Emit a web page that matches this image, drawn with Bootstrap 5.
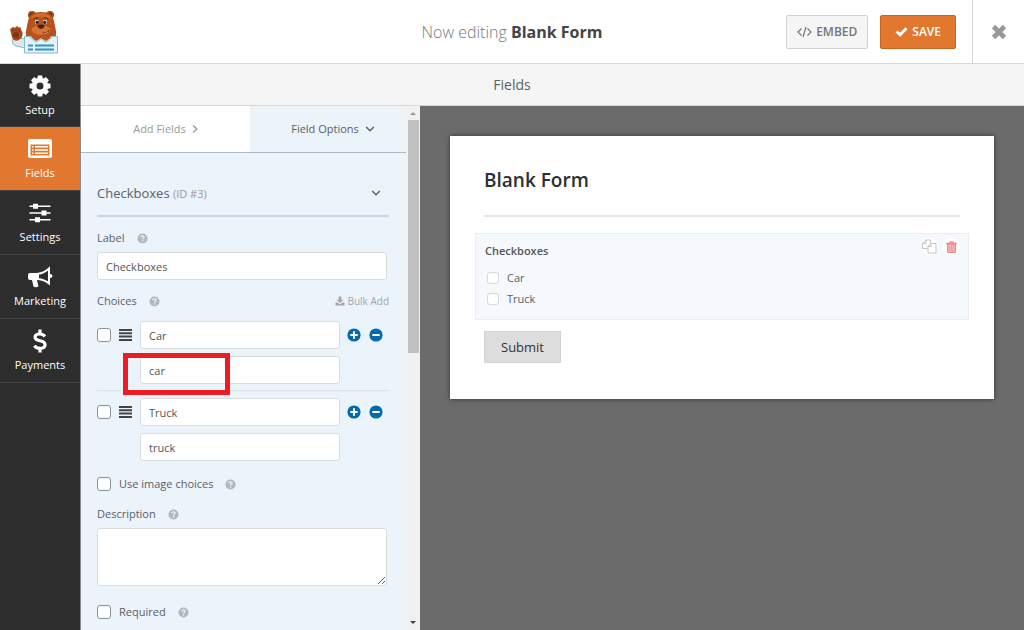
<!DOCTYPE html>
<html lang="en">
<head>
<meta charset="utf-8">
<meta name="viewport" content="width=device-width, initial-scale=1">
<title>Form Builder - Blank Form</title>
<link href="https://cdn.jsdelivr.net/npm/bootstrap@5.3.0/dist/css/bootstrap.min.css" rel="stylesheet">
<style>
  body { font-family: "Open Sans", "Noto Sans", sans-serif; font-size: 11px; line-height: 18px; color: #5b6066; }
  svg { display: block; flex: none; }
  button { color: inherit; }

  .topbar { display: grid; grid-template-columns: 1fr auto 1fr; height: 64px; border-bottom: 1px solid #d9d9d9; }
  .topbar h1 { font-size: 16px; line-height: 24px; font-weight: 300; color: #777; }
  .topbar h1 b { font-weight: 700; color: #444; }
  .tool { height: 34px; font-size: 12px; line-height: 18px; font-weight: 600; border-radius: 2px; padding: 0 10px; gap: 4px; }
  .tool-embed { background: #f5f5f5; border: 1px solid #d3d3d3; color: #777; }
  .tool-save { background: #e27730; border: 1px solid #c9641f; color: #fff; padding: 0 14px; }
  .tool-close { width: 52px; border-left: 1px solid #d6d6d6; color: #999; }

  .rail { width: 81px; background: #2d2d2d; border-right: 1px solid #8b8d90; }
  .rail a { height: 64px; color: #fff; border-bottom: 1px solid #414141; padding-top: 10px; gap: 3px; text-decoration: none; }
  .rail a:first-child { height: 63px; }
  .rail a.active { background: #e27730; }

  .section-bar { height: 42px; background: #f5f5f5; border-bottom: 1px solid #d6d6d6; font-size: 14px; padding-right: 81px; }

  .side { width: 339px; }
  .options { background: #ebf3fb; min-width: 0; }
  .tabs { height: 47px; border-bottom: 1px solid #b0b9cb; }
  .tabs button { gap: 6px; }
  .tab-add { background: #fff; color: #999; width: 169px; }
  .fields { padding: 0 17px 0 16px; }
  .group-head { height: 64px; padding: 18px 8px 0 0; border-bottom: 2px solid #cbd5e2; font-size: 13px; }
  .group-head small { font-size: 11px; color: #999; }
  .line { display: flex; align-items: center; gap: 8px; margin: 12px 0 5px; }
  .line-list { margin-bottom: 11px; }
  .line-tick { margin-top: 14px; }
  .help { color: #b3b8bd; }
  .box { height: 28px; padding: 0 8px; font-size: 11px; line-height: 18px; color: #555; border: 1px solid #d9dcdf; border-radius: 3px; background: #fff; }
  .wide { display: block; width: calc(100% - 2px); }
  .tick { appearance: none; width: 14px; height: 14px; margin: 0; flex: none; border: 1px solid #8c9299; border-radius: 3px; background: #fff; }
  .tick:checked { background: #036aab; }
  .choice { display: grid; grid-template-columns: 14px 15px 1fr 42px; column-gap: 7px; row-gap: 7px; align-items: center; }
  .choice .box { width: 100%; }
  .choice .value { grid-column: 3; }
  .choice + .choice { border-top: 1px solid #dde2e7; margin-top: 6px; padding-top: 7px; }
  .marker { position: absolute; left: 26px; top: 32px; width: 107px; height: 42px; border: 5px solid #ed1c24; }
  .notes { height: 58px; margin-bottom: 17px; resize: vertical; }
  .bulk { color: #a2a6aa; font-size: 10px; gap: 2px; text-decoration: none; }

  .scroller { width: 14px; background: #f1f1f1; }
  .scroller .thumb { width: 11px; height: 233px; background: #c1c1c1; }

  .canvas { background: #6b6b6b; padding: 30px; min-width: 0; }
  .sheet { background: #fff; padding: 30px 25px 36px; box-shadow: 0 0 5px rgba(0,0,0,.5); }
  .sheet h2 { font-size: 19px; line-height: 28px; font-weight: 600; color: #2b2f36; margin: 0 9px; padding-bottom: 21px; border-bottom: 2px solid #e6e6e6; }
  .field-card { background: #f5f8fc; border: 1px solid #ebedef; margin: 16px 0 11px; padding: 8px 9px 10px; }
  .field-title { font-weight: 600; color: #555; margin-bottom: 7px; }
  .field-card label { height: 21px; gap: 8px; padding-left: 2px; }
  .field-card .tick { width: 12px; height: 12px; border-color: #d5d8dc; }
  .actions { position: absolute; top: 4px; right: 8px; gap: 5px; }
  .actions button { width: 17px; height: 17px; border-radius: 50%; background: #fff; }
  .submit { height: 32px; margin-left: 9px; padding: 0 16px; background: #ddd; border: 1px solid #d3d3d3; color: #333; font-size: 13px; }
</style>
</head>
<body class="d-flex flex-column vh-100 overflow-hidden">
<svg class="d-none" aria-hidden="true">
  <symbol id="i-help" viewBox="0 0 12 12"><circle cx="6" cy="6" r="5.5" fill="currentColor"/><path d="M4.2 4.7C4.3 2.6 7.8 2.7 7.7 4.6C7.7 5.8 6.1 5.6 6 7" fill="none" stroke="#ebf3fb" stroke-width="1.4"/><path d="M5.2 8h1.6v1.4H5.2z" fill="#ebf3fb"/></symbol>
  <symbol id="i-down" viewBox="0 0 10 10"><path d="M1.2 3L5 6.8L8.8 3" fill="none" stroke="currentColor" stroke-width="1.4"/></symbol>
  <symbol id="i-bars" viewBox="0 0 15 12"><path d="M1 1h13M1 4.3h13M1 7.6h13M1 11h13" stroke="#444" stroke-width="2"/></symbol>
  <symbol id="i-plus" viewBox="0 0 14 14"><circle cx="7" cy="7" r="6.6" fill="#036aab"/><path d="M7 3.3v7.4M3.3 7h7.4" stroke="#fff" stroke-width="2"/></symbol>
  <symbol id="i-minus" viewBox="0 0 14 14"><circle cx="7" cy="7" r="6.6" fill="#036aab"/><path d="M3.3 7h7.4" stroke="#fff" stroke-width="2"/></symbol>
</svg>

<header class="topbar bg-white flex-shrink-0">
  <div class="d-flex align-items-center ps-2">
    <svg width="52" height="46" viewBox="8 8 52 46" role="img" aria-label="Bear logo">
      <path d="M12 39q0 5 4 6l9 2v-9l-5-1z" fill="#d5e8ee" stroke="#8fb5c1"/>
      <path d="M10.5 30q-1-3 1.5-3q1-2 3 0q2-3 3.5-.5q3-1 2.5 2l1.5 3q1 6-5 8q-5 1-6-5z" fill="#a8481b"/>
      <ellipse cx="16" cy="34" rx="3" ry="3" fill="#7d3518"/><path d="M13 29v2M16 28v2M19 29v2" stroke="#7d3518"/>
      <circle cx="32" cy="14" r="4" fill="#a8481b"/><circle cx="50" cy="14" r="4" fill="#a8481b"/>
      <circle cx="32" cy="14" r="2" fill="#662a16"/><circle cx="50" cy="14" r="2" fill="#662a16"/>
      <path d="M28 20q1-9 13-9t13 9l2 10q1 8-5 9H30q-5-1-4-9z" fill="#b9511d"/>
      <path d="M30 18q3-6 11-6t11 6q-11-4-22 0z" fill="#d06b2a"/>
      <path d="M32 27q9-6 18 0q2 6-9 7q-11-1-9-7z" fill="#d4742f"/>
      <circle cx="37" cy="21" r="2.2" fill="#cfd9dd"/><circle cx="45" cy="21" r="2.2" fill="#cfd9dd"/>
      <circle cx="37.3" cy="21.3" r="1.6" fill="#282120"/><circle cx="44.7" cy="21.3" r="1.6" fill="#282120"/>
      <path d="M34 17.5l4-1M44 16.5l4 1" stroke="#66301c" stroke-width="1.2"/>
      <path d="M37 24.5q4-2 8 0q-1 3-4 3.5q-3-.5-4-3.5z" fill="#41251e"/>
      <path d="M43 32q4 1 6-3q0 4-4 4.5z" fill="#fff" stroke="#66301c" stroke-width=".8"/>
      <path d="M24.5 35.5h33v16.5h-33z" fill="#e4f3f7" stroke="#8fb9c5"/>
      <path d="M31 35q2 4 5 5l5-2.5l5 2.5q4-1 5-5z" fill="#b9511d"/>
      <path d="M29 35.500l7 5.500l5-3l5 3l7-5.500" fill="none" stroke="#a9cbd5" stroke-width="1.2"/>
      <path d="M28 44.500h5M35 44.500h19M28 48.500h5M35 48.500h19" stroke="#2c94d4" stroke-width="1.8"/>
    </svg>
  </div>
  <h1 class="m-0 align-self-center">Now editing <b>Blank Form</b></h1>
  <div class="d-flex align-items-center justify-content-end">
    <button type="button" class="tool tool-embed d-flex align-items-center me-2">
      <svg width="15" height="12" viewBox="0 0 15 12" fill="none" stroke="currentColor" stroke-width="1.2"><path d="M4.5 2.5L1 6l3.5 3.5M10.5 2.5L14 6l-3.5 3.5M9 1L6 11"/></svg>
      EMBED
    </button>
    <button type="button" class="tool tool-save d-flex align-items-center ms-1 me-3">
      <svg width="13" height="12" viewBox="0 0 13 12"><path d="M.5 6.4l2-2l2.6 2.4L10.5 1.2L12.6 3.2L5.2 10.8z" fill="currentColor"/></svg>
      SAVE
    </button>
    <button type="button" class="tool-close h-100 border-top-0 border-end-0 border-bottom-0 bg-transparent d-flex align-items-center justify-content-center p-0" aria-label="Close">
      <svg width="16" height="16" viewBox="0 0 16 16"><path d="M2.5 2.5l11 11M13.5 2.5l-11 11" stroke="currentColor" stroke-width="4.6"/></svg>
    </button>
  </div>
</header>

<div class="d-flex flex-fill overflow-hidden">
  <nav class="rail flex-shrink-0" aria-label="Builder">
    <a href="#" class="d-flex flex-column align-items-center">
      <svg width="24" height="24" viewBox="0 0 24 24"><g fill="#fff"><path d="M9.8 1.5h4.4l.7 4H9.1zM9.1 18.5h5.8l-.7 4H9.8z"/><path d="M9.8 1.5h4.4l.7 4H9.1zM9.1 18.5h5.8l-.7 4H9.8z" transform="rotate(45 12 12)"/><path d="M9.8 1.5h4.4l.7 4H9.1zM9.1 18.5h5.8l-.7 4H9.8z" transform="rotate(90 12 12)"/><path d="M9.8 1.5h4.4l.7 4H9.1zM9.1 18.5h5.8l-.7 4H9.8z" transform="rotate(135 12 12)"/></g><circle cx="12" cy="12" r="5.8" fill="none" stroke="#fff" stroke-width="4.6"/></svg>
      Setup
    </a>
    <a href="#" class="active d-flex flex-column align-items-center" aria-current="page">
      <svg width="24" height="24" viewBox="0 0 24 24"><rect y="2" width="24" height="19" rx="2" fill="#fff"/><path d="M2.5 7.5h19v11h-19z" fill="#e27730"/><path d="M4 9.8h1.5M7 9.8h13M4 13h1.5M7 13h13M4 16.2h1.5M7 16.2h13" stroke="#fff" stroke-width="1.4"/></svg>
      Fields
    </a>
    <a href="#" class="d-flex flex-column align-items-center">
      <svg width="24" height="24" viewBox="0 0 24 24" fill="#fff"><path d="M1.5 4.5h21v1.6h-21zM1.5 11.2h21v1.6h-21zM1.5 17.9h21v1.6h-21z"/><path d="M5 2.8h5v5H5zM13.5 9.5h5v5h-5zM7 16.2h5v5H7z"/></svg>
      Settings
    </a>
    <a href="#" class="d-flex flex-column align-items-center">
      <svg width="26" height="24" viewBox="0 0 26 24"><path d="M3 8h8v7h-1l1.500 6.500q-3 1.500-5 0L5 15H3q-2 0-2-2v-3q0-2 2-2z" fill="#fff"/><path d="M11 8.800q6-.8 11-5.300v15q-5-4-11-4.500z" fill="none" stroke="#fff" stroke-width="2"/><path d="M23 9q2.500 0 2.500 2T23 13z" fill="#fff"/></svg>
      Marketing
    </a>
    <a href="#" class="d-flex flex-column align-items-center">
      <svg width="24" height="24" viewBox="0 0 24 24" fill="none" stroke="#fff" stroke-width="3.2"><path d="M17 7.5Q15 5 12 5C5.5 5 5.5 10.5 12 11.7C19 13 18.5 19.3 12 19.3Q8.5 19.3 6.3 16.7"/><path d="M12 .5v4M12 19.5v4"/></svg>
      Payments
    </a>
  </nav>

  <div class="d-flex flex-column flex-fill overflow-hidden">
    <div class="section-bar d-flex align-items-center justify-content-center flex-shrink-0">Fields</div>
    <div class="d-flex flex-fill overflow-hidden">

      <aside class="side d-flex flex-shrink-0">
        <div class="options flex-fill overflow-hidden">
          <div class="tabs d-flex">
            <button type="button" class="tab-add border-0 d-flex align-items-center justify-content-center">Add Fields
              <svg width="6" height="10" viewBox="0 0 6 10"><path d="M1 1.5L4.8 5L1 8.5" fill="none" stroke="currentColor" stroke-width="1.4"/></svg>
            </button>
            <button type="button" class="border-0 bg-transparent flex-fill d-flex align-items-center justify-content-center ps-3">Field Options
              <svg width="10" height="10"><use href="#i-down"/></svg>
            </button>
          </div>
          <form class="fields">
            <div class="group-head d-flex align-items-center justify-content-between">
              <span>Checkboxes <small>(ID #3)</small></span>
              <svg width="10" height="10"><use href="#i-down"/></svg>
            </div>

            <div class="line">
              <label for="f-label" class="me-1">Label</label>
              <svg class="help" width="11" height="11"><use href="#i-help"/></svg>
            </div>
            <input id="f-label" class="box wide" type="text" value="Checkboxes">

            <div class="line line-list">
              <span class="me-1">Choices</span>
              <svg class="help" width="11" height="11"><use href="#i-help"/></svg>
              <a href="#" class="bulk d-flex align-items-center ms-auto">
                <svg width="10" height="10" viewBox="0 0 10 10" fill="currentColor"><path d="M3.7.5h2.600v3.200h2.200L5 7L1.500 3.700h2.200zM.5 6.500h2L5 8.500l2.500-2h2v3h-9z"/></svg>
                Bulk Add
              </a>
            </div>

            <div class="choice position-relative">
              <input class="tick" type="checkbox" aria-label="Car selected by default">
              <svg width="15" height="12"><use href="#i-bars"/></svg>
              <input class="box" type="text" value="Car" aria-label="Choice 1 label">
              <span class="d-flex gap-2">
                <button type="button" class="border-0 bg-transparent p-0" aria-label="Add choice"><svg width="14" height="14"><use href="#i-plus"/></svg></button>
                <button type="button" class="border-0 bg-transparent p-0" aria-label="Remove choice"><svg width="14" height="14"><use href="#i-minus"/></svg></button>
              </span>
              <input class="box value" type="text" value="car" aria-label="Choice 1 value">
              <div class="marker" aria-hidden="true"></div>
            </div>
            <div class="choice">
              <input class="tick" type="checkbox" aria-label="Truck selected by default">
              <svg width="15" height="12"><use href="#i-bars"/></svg>
              <input class="box" type="text" value="Truck" aria-label="Choice 2 label">
              <span class="d-flex gap-2">
                <button type="button" class="border-0 bg-transparent p-0" aria-label="Add choice"><svg width="14" height="14"><use href="#i-plus"/></svg></button>
                <button type="button" class="border-0 bg-transparent p-0" aria-label="Remove choice"><svg width="14" height="14"><use href="#i-minus"/></svg></button>
              </span>
              <input class="box value" type="text" value="truck" aria-label="Choice 2 value">
            </div>

            <div class="line line-tick">
              <input class="tick" type="checkbox" id="f-images">
              <label for="f-images" class="me-1">Use image choices</label>
              <svg class="help" width="11" height="11"><use href="#i-help"/></svg>
            </div>

            <div class="line">
              <label for="f-desc" class="me-1">Description</label>
              <svg class="help" width="11" height="11"><use href="#i-help"/></svg>
            </div>
            <textarea id="f-desc" class="box wide notes"></textarea>

            <div class="line line-tick">
              <input class="tick" type="checkbox" id="f-req">
              <label for="f-req" class="me-1">Required</label>
              <svg class="help" width="11" height="11"><use href="#i-help"/></svg>
            </div>
          </form>
        </div>
        <div class="scroller d-flex flex-column align-items-center flex-shrink-0" aria-hidden="true">
          <svg width="14" height="14" viewBox="0 0 14 14"><path d="M4 9h6L7 6z" fill="#999"/></svg>
          <div class="thumb"></div>
          <svg class="mt-auto" width="14" height="14" viewBox="0 0 14 14"><path d="M4 5h6L7 8z" fill="#444"/></svg>
        </div>
      </aside>

      <main class="canvas flex-fill">
        <section class="sheet">
          <h2>Blank Form</h2>
          <div class="field-card position-relative" role="group" aria-labelledby="p-title">
            <div id="p-title" class="field-title">Checkboxes</div>
            <label class="d-flex align-items-center"><input class="tick" type="checkbox">Car</label>
            <label class="d-flex align-items-center"><input class="tick" type="checkbox">Truck</label>
            <div class="actions d-flex">
              <button type="button" class="border-0 p-0 d-flex align-items-center justify-content-center" aria-label="Duplicate field">
                <svg width="15" height="15" viewBox="0 0 15 15" fill="none" stroke="#c4c4c4"><path d="M5.5 9.5h-5v-5l3.5-3.5h4.5v3M.5 4.5h3.5v-3.5M6 7.5l3-3h5v9.5H6zM6 7.5h3v-3"/></svg>
              </button>
              <button type="button" class="border-0 p-0 d-flex align-items-center justify-content-center" aria-label="Delete field">
                <svg width="11" height="12" viewBox="0 0 11 12"><path d="M1.5 3h8v8.5h-8z" fill="#f3b4b4" stroke="#e88"/><path d="M0 2.5h11M3.5 2.5l.8-1.7h2.4l.8 1.7" fill="none" stroke="#e88" stroke-width="1.3"/><path d="M3.7 4.5v5.5M5.5 4.5v5.5M7.3 4.5v5.5" stroke="#e99" stroke-width=".8"/></svg>
              </button>
            </div>
          </div>
          <button type="submit" class="submit">Submit</button>
        </section>
      </main>
    </div>
  </div>
</div>
<script src="https://cdn.jsdelivr.net/npm/bootstrap@5.3.0/dist/js/bootstrap.bundle.min.js"></script>
</body>
</html>
